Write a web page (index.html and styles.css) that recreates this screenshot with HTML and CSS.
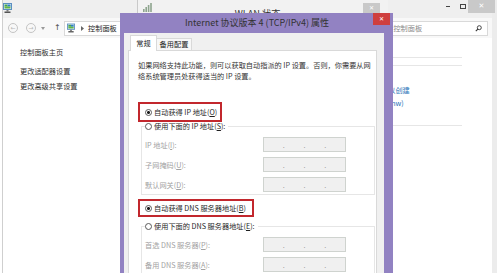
FILE: index.html
```html
<!DOCTYPE html>
<html lang="zh-CN">
<head>
    <meta charset="UTF-8">
    <meta name="viewport" content="width=device-width, initial-scale=1.0">
    <title>Internet 协议版本 4 (TCP/IPv4) 属性</title>
    <link rel="stylesheet" href="styles.css">
</head>
<body>
    <div class="screen">
        <!-- 控制面板窗口 -->
        <div class="cp-window">
            <div class="cp-title">
                <svg class="cp-icon" viewBox="0 0 9 10" width="9" height="10">
                    <rect x="0.5" y="0.5" width="8" height="6" fill="#e6f0f8" stroke="#5b8fc0"/>
                    <rect x="1.5" y="1.5" width="3" height="2" fill="#46a54b"/>
                    <rect x="4.5" y="1.5" width="3" height="2" fill="#2f7fc8"/>
                    <rect x="1.5" y="3.5" width="6" height="2" fill="#62b648"/>
                    <rect x="3.5" y="7" width="2" height="1.5" fill="#7a7a7a"/>
                    <rect x="1.5" y="8.5" width="6" height="1.5" fill="#555"/>
                </svg>
                <div class="win-btns">
                    <span class="win-min"></span>
                    <span class="win-max"></span>
                    <span class="win-close">✕</span>
                </div>
            </div>
            <div class="cp-nav">
                <span class="nav-btn">←</span>
                <span class="nav-btn">→</span>
                <svg class="nav-drop" viewBox="0 0 4 3" width="4" height="3"><path d="M0 0 H4 L2 3 Z" fill="#9a9a9a"/></svg>
                <span class="nav-up">↑</span>
                <div class="address">
                    <svg class="cp-icon" viewBox="0 0 9 10" width="8" height="10">
                        <rect x="0.5" y="0.5" width="8" height="6" fill="#e6f0f8" stroke="#5b8fc0"/>
                        <rect x="1.5" y="1.5" width="3" height="2" fill="#46a54b"/>
                        <rect x="4.5" y="1.5" width="3" height="2" fill="#2f7fc8"/>
                        <rect x="1.5" y="3.5" width="6" height="2" fill="#62b648"/>
                        <rect x="3.5" y="7" width="2" height="1.5" fill="#7a7a7a"/>
                        <rect x="1.5" y="8.5" width="6" height="1.5" fill="#555"/>
                    </svg>
                    <svg class="crumb-sep" viewBox="0 0 3 5" width="3" height="5"><path d="M0 0 L3 2.5 L0 5 Z" fill="#666"/></svg>
                    <span class="crumb">控制面板</span>
                </div>
                <div class="search">
                    <span>搜索控制面板</span>
                    <svg class="search-icon" viewBox="0 0 7 7" width="7" height="7">
                        <circle cx="4.3" cy="2.7" r="2" fill="none" stroke="#333" stroke-width="0.9"/>
                        <path d="M2.9 4.1 L0.8 6.2" stroke="#333" stroke-width="1.1"/>
                    </svg>
                </div>
            </div>
            <div class="cp-body">
                <div class="sidebar">
                    <a class="side-link">控制面板主页</a>
                    <a class="side-link">更改适配器设置</a>
                    <a class="side-link">更改高级共享设置</a>
                </div>
                <div class="cp-main">
                    <div class="net-rule"></div>
                    <div class="net-box">
                        <span class="net-label">家庭组：</span><a class="net-link">可以创建</a>
                        <span class="net-label">连接：</span><a class="net-link">(Tenw)</a>
                    </div>
                </div>
            </div>
        </div>

        <!-- WLAN 状态窗口 -->
        <div class="wlan-window">
            <div class="wlan-title">
                <svg class="wlan-icon" viewBox="0 0 9 10" width="9" height="10">
                    <rect x="0" y="7" width="1.6" height="3" fill="#8ea58e"/>
                    <rect x="2.4" y="5" width="1.6" height="5" fill="#8ea58e"/>
                    <rect x="4.8" y="3" width="1.6" height="7" fill="#8ea58e"/>
                    <rect x="7.2" y="1" width="1.6" height="9" fill="#8ea58e"/>
                </svg>
                <span class="wlan-name">WLAN 状态</span>
                <span class="wlan-close">✕</span>
            </div>
        </div>

        <!-- 属性对话框 -->
        <div class="dialog">
            <div class="dlg-title">Internet 协议版本 4 (TCP/IPv4) 属性</div>
            <span class="dlg-close">✕</span>
            <div class="dlg-body">
                <div class="tabs">
                    <span class="tab active">常规</span>
                    <span class="tab">备用配置</span>
                </div>
                <div class="panel">
                    <p class="intro">如果网络支持此功能，则可以获取自动指派的 IP 设置。否则，你需要从网<br>络系统管理员处获得适当的 IP 设置。</p>

                    <label class="choice marked ip-auto"><span class="radio on"></span>自动获得 IP 地址(<u>O</u>)</label>
                    <fieldset class="group">
                        <legend class="choice"><span class="radio"></span>使用下面的 IP 地址(<u>S</u>):</legend>
                        <div class="field"><span class="field-label">IP 地址(<u>I</u>):</span><span class="ip"><i>.</i><i>.</i><i>.</i></span></div>
                        <div class="field"><span class="field-label">子网掩码(<u>U</u>):</span><span class="ip"><i>.</i><i>.</i><i>.</i></span></div>
                        <div class="field"><span class="field-label">默认网关(<u>D</u>):</span><span class="ip"><i>.</i><i>.</i><i>.</i></span></div>
                    </fieldset>

                    <label class="choice marked dns-auto"><span class="radio on"></span>自动获得 DNS 服务器地址(<u>B</u>)</label>
                    <fieldset class="group dns-group">
                        <legend class="choice"><span class="radio"></span>使用下面的 DNS 服务器地址(<u>E</u>):</legend>
                        <div class="field"><span class="field-label">首选 DNS 服务器(<u>P</u>):</span><span class="ip"><i>.</i><i>.</i><i>.</i></span></div>
                        <div class="field"><span class="field-label">备用 DNS 服务器(<u>A</u>):</span><span class="ip"><i>.</i><i>.</i><i>.</i></span></div>
                    </fieldset>
                </div>
            </div>
        </div>
    </div>
</body>
</html>
```

FILE: styles.css
```css
body {
    margin: 0;
    background: #fff;
    font-family: "Noto Sans CJK SC", "Noto Sans", sans-serif;
    font-size: 7.2px;
    color: #2b2b2b;
}
.screen {
    position: relative;
    width: 500px;
    height: 273px;
    overflow: hidden;
}

/* 控制面板窗口 */
.cp-window {
    position: absolute;
    left: 2px;
    top: 0;
    width: 495px;
    height: 273px;
    box-sizing: border-box;
    border-left: 1px solid #cfcfcf;
    border-right: 5px solid #ececec;
    background: #fff;
    display: flex;
    flex-direction: column;
}
.cp-title {
    height: 18px;
    flex: none;
    background: #efefef;
    display: flex;
    align-items: flex-start;
}
.cp-title .cp-icon {
    margin-top: 3px;
}
.win-btns {
    margin-left: auto;
    margin-right: -3px;
    height: 13px;
    display: flex;
    align-items: center;
}
.win-min {
    width: 4px;
    height: 1px;
    background: #444;
    margin-right: 10px;
}
.win-max {
    width: 6px;
    height: 5px;
    box-sizing: border-box;
    border: 1px solid #444;
    margin-right: 2px;
}
.win-close {
    width: 27px;
    height: 13px;
    background: #c9c9c9;
    color: #fff;
    font: 7px/13px "DejaVu Sans", sans-serif;
    text-align: center;
}
.cp-nav {
    height: 20px;
    flex: none;
    background: #f8f8f8;
    display: flex;
    align-items: center;
    padding-left: 5px;
}
.nav-btn {
    width: 10px;
    height: 10px;
    box-sizing: border-box;
    border: 1px solid #c4c4c4;
    border-radius: 50%;
    color: #b8b8b8;
    font: 6px/8px "DejaVu Sans", sans-serif;
    text-align: center;
    margin-right: 8px;
}
.nav-btn + .nav-btn {
    margin-right: 5px;
}
.nav-up {
    width: 6px;
    margin-left: 9px;
    color: #4a4a4a;
    font: 8px/10px "DejaVu Sans", sans-serif;
}
.address {
    flex: 1;
    height: 15px;
    box-sizing: border-box;
    margin-left: 4px;
    border: 1px solid #d9d9d9;
    background: #fff;
    display: flex;
    align-items: center;
    padding-left: 2px;
}
.crumb-sep {
    margin-left: 6px;
}
.crumb {
    margin-left: 4px;
    color: #222;
}
.search {
    width: 116px;
    height: 15px;
    box-sizing: border-box;
    margin: 0 4px 0 10px;
    border: 1px solid #d9d9d9;
    background: #fff;
    display: flex;
    align-items: center;
    padding-left: 6px;
    color: #8a8a8a;
}
.search-icon {
    margin-left: auto;
    margin-right: 5px;
}
.cp-body {
    flex: 1;
    display: flex;
}
.sidebar {
    width: 127px;
    flex: none;
    box-sizing: border-box;
    padding: 9px 0 0 17px;
    display: flex;
    flex-direction: column;
    align-items: flex-start;
}
.side-link {
    line-height: 10px;
    color: #2e2e2e;
}
.side-link + .side-link {
    margin-top: 9px;
}
.side-link + .side-link + .side-link {
    margin-top: 5px;
}
.cp-main {
    flex: 1;
}
.net-rule {
    margin: 19px 30px 0 120px;
    border-top: 1px solid #e6e6e6;
}
.net-box {
    margin: 7px 30px 0 120px;
    border-top: 1px solid #e6e6e6;
    border-bottom: 1px solid #e6e6e6;
    padding: 18px 0 15px;
    display: grid;
    grid-template-columns: 131px auto;
    line-height: 13px;
}
.net-label {
    color: #444;
}
.net-link {
    color: #2b74b8;
}

/* WLAN 状态窗口 */
.wlan-window {
    position: absolute;
    left: 137px;
    top: 0;
    width: 251px;
    height: 120px;
    box-sizing: border-box;
    border-left: 1px solid #c9c9c9;
    background: #f2f2f2;
}
.wlan-title {
    height: 18px;
    display: flex;
    align-items: flex-start;
}
.wlan-icon {
    margin: 2px 0 0 5px;
}
.wlan-name {
    flex: 1;
    text-align: center;
    font-size: 9.2px;
    line-height: 10px;
    padding-top: 8px;
    color: #333;
}
.wlan-close {
    width: 17px;
    height: 10px;
    margin: 3px 8px 0 0;
    background: #c9c9c9;
    color: #fff;
    font: 6px/10px "DejaVu Sans", sans-serif;
    text-align: center;
}

/* 属性对话框 */
.dialog {
    position: absolute;
    left: 120px;
    top: 13px;
    width: 273px;
    height: 270px;
    box-sizing: border-box;
    padding: 0 9px 0 4px;
    background: #9282c2;
    display: flex;
    flex-direction: column;
}
.dlg-title {
    height: 20px;
    flex: none;
    padding-left: 6px;
    text-align: center;
    font-size: 9px;
    line-height: 20px;
    color: #333;
}
.dlg-close {
    position: absolute;
    right: 3px;
    top: 0;
    width: 17px;
    height: 12px;
    background: #cf3f3f;
    color: #fff;
    font: 6px/12px "DejaVu Sans", sans-serif;
    text-align: center;
}
.dlg-body {
    flex: 1;
    background: #f0f0f0;
    padding: 2px 7px 0 4px;
    display: flex;
    flex-direction: column;
}
.tabs {
    display: flex;
    align-items: flex-end;
    margin-left: 2px;
}
.tab {
    width: 36px;
    height: 12px;
    box-sizing: border-box;
    margin-left: -1px;
    border: 1px solid #d9d9d9;
    border-bottom: none;
    background: #f7f7f7;
    line-height: 11px;
    text-align: center;
    color: #222;
}
.tab.active {
    width: 27px;
    height: 16px;
    margin: 0 0 -1px;
    background: #fff;
    line-height: 14px;
    position: relative;
    z-index: 1;
}
.panel {
    flex: 1;
    background: #fff;
    border: 1px solid #d9d9d9;
    padding: 9px 1px 0 9px;
}
.intro {
    margin: 0;
    line-height: 10.5px;
    color: #333;
}
.choice {
    display: flex;
    align-items: center;
    line-height: 9px;
    color: #1f1f1f;
}
.marked {
    height: 20px;
    box-sizing: border-box;
    border: 2px solid #c2272d;
    padding-left: 5px;
}
.ip-auto {
    width: 84px;
    margin-top: 21px;
}
.dns-auto {
    width: 116px;
    height: 18px;
    margin-top: 4px;
}
.radio {
    width: 7px;
    height: 7px;
    flex: none;
    box-sizing: border-box;
    border: 1px solid #5a5a5a;
    border-radius: 50%;
    background: #fff;
    margin-right: 2px;
}
.radio.on {
    background: radial-gradient(circle, #1a1a1a 1.2px, #fff 1.7px);
}
.group {
    margin: 0 0 0 3px;
    padding: 6px 0 2px 3px;
    border: 1px solid #e6e6e6;
    min-width: 0;
}
.group legend {
    padding: 0 3px 0 0;
}
.dns-group {
    margin-top: 5px;
}
.field {
    display: flex;
    align-items: center;
    height: 15px;
}
.field + .field {
    margin-top: 5px;
}
.field-label {
    width: 118px;
    color: #a2a2a2;
}
.ip {
    width: 83px;
    height: 15px;
    box-sizing: border-box;
    border: 1px solid #cfd3cf;
    background: #f0f0f0;
    display: flex;
    justify-content: space-evenly;
    align-items: center;
    color: #999;
}
.ip i {
    font-style: normal;
}
```
